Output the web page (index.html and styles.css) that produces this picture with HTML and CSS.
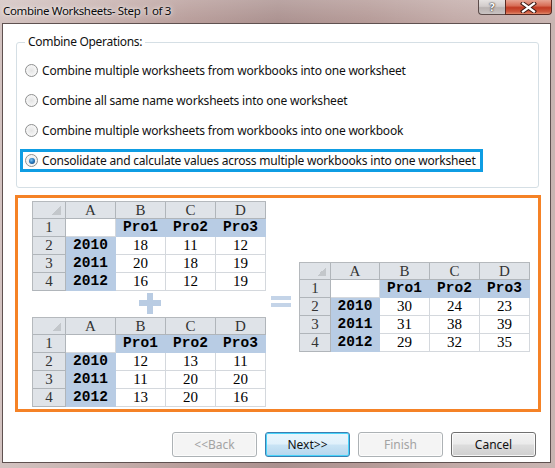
FILE: index.html
```html
<!DOCTYPE html>
<html>
<head>
<meta charset="utf-8">
<link rel="stylesheet" href="styles.css">
</head>
<body>
<div class="frame">
  <div class="titlebar">
    <span class="title">Combine Worksheets- Step 1 of 3</span>
    <div class="caption-buttons">
      <div class="cap-help">?</div>
      <div class="cap-close">
        <svg width="17" height="11" viewBox="0 0 17 11"><path d="M3 1.5 L14 9.5 M14 1.5 L3 9.5" stroke="#3b1a14" stroke-width="4.2" stroke-linecap="square"/><path d="M3 1.5 L14 9.5 M14 1.5 L3 9.5" stroke="#ffffff" stroke-width="2.2" stroke-linecap="square"/></svg>
      </div>
    </div>
  </div>
  <div class="client">
    <div class="group">
      <div class="legend">Combine Operations:</div>
      <div class="options">
        <div class="option"><span class="radio"></span><span>Combine multiple worksheets from workbooks into one worksheet</span></div>
        <div class="option"><span class="radio"></span><span>Combine all same name worksheets into one worksheet</span></div>
        <div class="option"><span class="radio"></span><span>Combine multiple worksheets from workbooks into one workbook</span></div>
        <div class="option option-selected"><span class="radio radio-on"></span><span>Consolidate and calculate values across multiple workbooks into one worksheet</span></div>
      </div>
    </div>
    <div class="preview">
      <div class="left-col">
        <div class="sheet">
          <div class="c hd corner"></div><div class="c hd">A</div><div class="c hd">B</div><div class="c hd">C</div><div class="c hd">D</div>
          <div class="c hd">1</div><div class="c"></div><div class="c bl">Pro1</div><div class="c bl">Pro2</div><div class="c bl">Pro3</div>
          <div class="c hd">2</div><div class="c bl">2010</div><div class="c n">18</div><div class="c n">11</div><div class="c n">12</div>
          <div class="c hd">3</div><div class="c bl">2011</div><div class="c n">20</div><div class="c n">18</div><div class="c n">19</div>
          <div class="c hd">4</div><div class="c bl">2012</div><div class="c n">16</div><div class="c n">12</div><div class="c n">19</div>
        </div>
        <div class="plus"></div>
        <div class="sheet">
          <div class="c hd corner"></div><div class="c hd">A</div><div class="c hd">B</div><div class="c hd">C</div><div class="c hd">D</div>
          <div class="c hd">1</div><div class="c"></div><div class="c bl">Pro1</div><div class="c bl">Pro2</div><div class="c bl">Pro3</div>
          <div class="c hd">2</div><div class="c bl">2010</div><div class="c n">12</div><div class="c n">13</div><div class="c n">11</div>
          <div class="c hd">3</div><div class="c bl">2011</div><div class="c n">11</div><div class="c n">20</div><div class="c n">20</div>
          <div class="c hd">4</div><div class="c bl">2012</div><div class="c n">13</div><div class="c n">20</div><div class="c n">16</div>
        </div>
      </div>
      <div class="equals"></div>
      <div class="sheet sheet-result">
        <div class="c hd corner"></div><div class="c hd">A</div><div class="c hd">B</div><div class="c hd">C</div><div class="c hd">D</div>
        <div class="c hd">1</div><div class="c"></div><div class="c bl">Pro1</div><div class="c bl">Pro2</div><div class="c bl">Pro3</div>
        <div class="c hd">2</div><div class="c bl">2010</div><div class="c n">30</div><div class="c n">24</div><div class="c n">23</div>
        <div class="c hd">3</div><div class="c bl">2011</div><div class="c n">31</div><div class="c n">38</div><div class="c n">39</div>
        <div class="c hd">4</div><div class="c bl">2012</div><div class="c n">29</div><div class="c n">32</div><div class="c n">35</div>
      </div>
    </div>
    <div class="buttons">
      <button class="btn btn-disabled">&lt;&lt;Back</button>
      <button class="btn btn-default">Next&gt;&gt;</button>
      <button class="btn btn-disabled">Finish</button>
      <button class="btn">Cancel</button>
    </div>
  </div>
</div>
</body>
</html>
```

FILE: styles.css
```css
* { box-sizing: border-box; }
html, body { margin: 0; padding: 0; }
body {
  width: 555px;
  height: 468px;
  overflow: hidden;
  font-family: "Noto Sans", "DejaVu Sans", sans-serif;
  font-size: 12px;
  color: #000;
}
.frame {
  width: 555px;
  height: 468px;
  background:
    linear-gradient(180deg, rgba(255,255,255,0.18) 0px, rgba(255,255,255,0) 23px),
    linear-gradient(90deg, #d3c3c1 0%, #c7b1ae 18%, #b89d9a 34%, #ab918f 50%, #b59a97 66%, #c2aaa7 82%, #c9b5b2 100%);
  padding: 0 4px 0 2px;
  display: flex;
  flex-direction: column;
}
.titlebar {
  height: 23px;
  display: flex;
  align-items: flex-start;
}
.title {
  margin: 3px 0 0 1px;
  line-height: 16px;
  font-size: 11.5px;
  letter-spacing: -0.35px;
  color: #0a0a0a;
  text-shadow: 0 0 6px rgba(255,255,255,0.9), 0 0 3px rgba(255,255,255,0.8);
}
.caption-buttons {
  margin-left: auto;
  display: flex;
  margin-right: -1px;
}
.cap-help {
  width: 27px;
  height: 15px;
  border: 1px solid #5c4c4a;
  border-top: none;
  border-right: none;
  border-bottom-left-radius: 4px;
  background: linear-gradient(180deg, #e6e2e1 0%, #d2cccb 45%, #b9b2b1 55%, #c9c3c2 100%);
  color: #fff;
  font-weight: bold;
  font-size: 11px;
  line-height: 14px;
  text-align: center;
  text-shadow: 0 0 2px #2a2222, 0 0 1px #2a2222;
}
.cap-close {
  width: 47px;
  height: 15px;
  border: 1px solid #5a2a22;
  border-top: none;
  border-bottom-right-radius: 4px;
  background: linear-gradient(180deg, #e7a493 0%, #d86f58 40%, #c13a22 55%, #cf5a3f 85%, #e08a6c 100%);
  display: flex;
  align-items: center;
  justify-content: center;
}
.client {
  height: 440px;
  background: #fff;
  border: 1px solid #5f5150;
  display: flex;
  flex-direction: column;
}
.group {
  margin: 18px 11px 0 13px;
  height: 146px;
  border: 1px solid #d5dfe5;
  border-radius: 3px;
  padding-left: 3px;
}
.legend {
  width: max-content;
  margin: -9px 0 0 5px;
  padding: 0 3px;
  background: #fff;
  line-height: 16px;
  letter-spacing: -0.3px;
  color: #111;
}
.options {
  margin-top: 9px;
  display: flex;
  flex-direction: column;
  gap: 7px;
}
.option {
  width: max-content;
  height: 23px;
  display: flex;
  align-items: center;
  gap: 4px;
  border: 3px solid transparent;
  padding: 0 4px 0 2px;
  color: #111;
  letter-spacing: -0.2px;
}
.option-selected { border-color: #0f9de3; }
.radio {
  width: 13px;
  height: 13px;
  border-radius: 50%;
  border: 1px solid #8e8f8f;
  background: radial-gradient(circle at 50% 50%, #e4e4e4 0%, #f2f2f2 50%, #fdfdfd 100%);
  display: flex;
  align-items: center;
  justify-content: center;
  flex: none;
}
.radio-on::after {
  content: "";
  width: 6px;
  height: 6px;
  border-radius: 50%;
  background: radial-gradient(circle at 40% 35%, #7fc6f3 0%, #2b7cc1 45%, #0d3c6c 100%);
}
.preview {
  margin: 7px 9px 0 12px;
  height: 217px;
  border: 3px solid #f58226;
  display: flex;
  align-items: flex-start;
}
.left-col {
  margin: 3px 0 0 14px;
  display: flex;
  flex-direction: column;
}
.sheet {
  display: grid;
  grid-template-columns: 33px 50px 50px 50px 50px;
  grid-template-rows: 17px 18px 18px 18px 18px;
  width: 234px;
  border-left: 1px solid #b5b9bd;
  border-top: 1px solid #b5b9bd;
  background: #fff;
}
.c {
  border-right: 1px solid #d4d8dd;
  border-bottom: 1px solid #d4d8dd;
  display: flex;
  align-items: center;
  justify-content: center;
  font-family: "Liberation Serif", serif;
  font-size: 15px;
  line-height: 1;
}
.hd {
  background: #dfe3e8;
  border-color: #b0b5ba;
  font-family: "Liberation Serif", serif;
  font-size: 15px;
  color: #333;
}
.corner {
  background:
    linear-gradient(135deg, transparent 50%, #c3c7cb 50%) right 4px bottom 3px / 9px 9px no-repeat,
    #dfe3e8;
}
.bl {
  background: #b8cce4;
  border-color: #b8cce4;
  font-family: "Liberation Mono", "Courier New", monospace;
  font-weight: bold;
  font-size: 14.5px;
}
.n { color: #000; }
.plus {
  width: 22px;
  height: 21px;
  margin: 2px 0 3px 107px;
  background:
    linear-gradient(#b9cce3, #b9cce3) 8px 0 / 6px 21px no-repeat,
    linear-gradient(#b9cce3, #b9cce3) 0 7px / 22px 6px no-repeat;
}
.equals {
  width: 20px;
  height: 11px;
  margin: 98px 0 0 5px;
  background:
    linear-gradient(#c4d4e8, #c4d4e8) 0 0 / 20px 4px no-repeat,
    linear-gradient(#c4d4e8, #c4d4e8) 0 7px / 20px 4px no-repeat;
}
.sheet-result {
  margin: 64px 0 0 8px;
  grid-template-columns: 31px 49px 50px 50px 50px;
  width: 231px;
}
.buttons {
  margin: 20px 14px 0 0;
  display: flex;
  justify-content: flex-end;
  gap: 8px;
}
.btn {
  width: 85px;
  height: 25px;
  font-family: "Noto Sans", "DejaVu Sans", sans-serif;
  font-size: 12px;
  color: #111;
  border: 1px solid #707070;
  border-radius: 3px;
  background: linear-gradient(180deg, #f2f2f2 0%, #ebebeb 48%, #dddddd 52%, #cfcfcf 100%);
  box-shadow: inset 0 0 0 1px rgba(255,255,255,0.8);
  padding: 0;
}
.btn-disabled {
  color: #a3a3a3;
  border-color: #adb2b5;
  background: #f4f4f4;
  box-shadow: inset 0 0 0 1px #fcfcfc;
}
.btn-default {
  border-color: #3c7fb1;
  background: linear-gradient(180deg, #eaf6fd 0%, #e0f1fb 48%, #c9e4f5 52%, #b5d6ed 100%);
  box-shadow: inset 0 0 0 1px #48d4fb;
}
```
